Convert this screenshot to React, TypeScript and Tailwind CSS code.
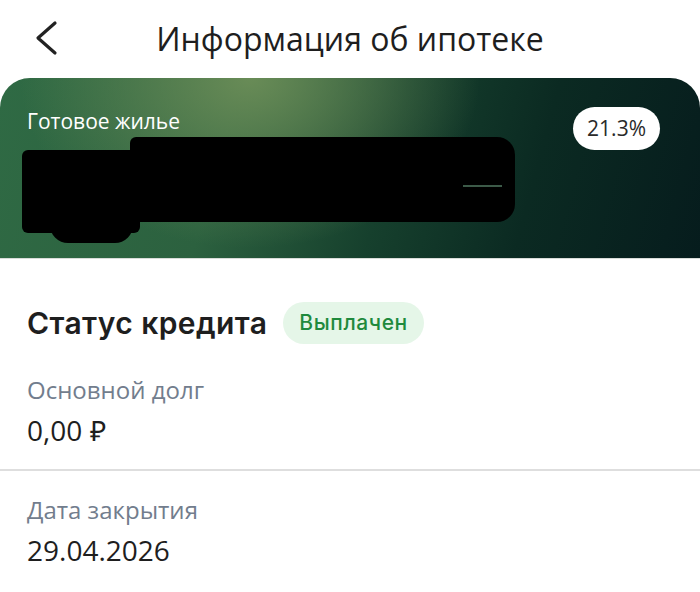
function BackIcon() {
  return (
    <svg width="26" height="36" viewBox="0 0 26 36" fill="none">
      <path d="M21 3L4 18L21 33" stroke="#222" strokeWidth="3.2" strokeLinecap="round" strokeLinejoin="round" />
    </svg>
  );
}

function InfoRow({ label, value }: { label: string; value: string }) {
  return (
    <div className="flex flex-col gap-[10px] px-[27px]">
      <p className="text-[24px] leading-[28px] text-[#727d8d]">{label}</p>
      <p className="text-[28px] leading-[32px] text-[#1e1e1e]">{value}</p>
    </div>
  );
}

export default function App() {
  return (
    <div className="w-[700px] h-[592px] bg-white overflow-hidden font-['Open_Sans',sans-serif]">
      {/* Header */}
      <div className="h-[78px] grid grid-cols-[1fr_auto_1fr] items-center">
        <div className="pl-[34px] pb-[2px]">
          <BackIcon />
        </div>
        <h1 className="text-[32px] leading-none text-[#1e1e1e] -mt-[1px]">Информация об ипотеке</h1>
        <div />
      </div>

      {/* Banner */}
      <div
        className="relative h-[180px] rounded-t-[30px] overflow-hidden bg-[#0b2a22]"
        style={{
          backgroundImage:
            'radial-gradient(ellipse 230px 170px at 250px 0px, rgba(108,142,88,0.95), rgba(108,142,88,0) 100%), linear-gradient(105deg, #2f6a44 0%, #2c613f 32%, #16402d 55%, #0b2a22 75%, #061c1d 100%)',
        }}
      >
        <div className="flex items-start justify-between pl-[27px] pr-[40px] pt-[29px]">
          <span className="text-[21px] leading-[28px] text-white">Готовое жилье</span>
          <span className="h-[43px] px-[14px] rounded-full bg-white flex items-center text-[21px] text-[#2a2a2a]">21.3%</span>
        </div>
        {/* redacted block */}
        <div className="absolute left-[50px] top-[142px] w-[83px] h-[23px] rounded-b-[18px] bg-black" />
        <div className="absolute left-[22px] top-[72px] w-[118px] h-[83px] rounded-[6px] bg-black" />
        <div className="absolute left-[130px] top-[59px] w-[385px] h-[85px] rounded-r-[18px] rounded-tl-[6px] bg-black" />
        <div className="absolute left-[463px] top-[107px] w-[39px] h-[2px] bg-[#3c5a48]" />
      </div>

      {/* Status */}
      <div className="border-t border-[#d9dcd9] pt-[43px]">
        <div className="flex items-center px-[27px]">
          <h2 className="font-['Inter',sans-serif] font-semibold text-[30px] leading-none text-[#1e1e1e] tracking-[0.4px]">Статус кредита</h2>
          <span className="ml-[16px] h-[42px] px-[16px] rounded-full bg-[#e5f6e8] flex items-center font-['Inter',sans-serif] font-medium text-[21px] tracking-[0.6px] text-[#1f8a3d]">Выплачен</span>
        </div>
        <div className="mt-[32px]">
          <InfoRow label="Основной долг" value="0,00 ₽" />
        </div>
        <div className="mt-[23px] border-t-2 border-[#dedede]" />
        <div className="mt-[25px]">
          <InfoRow label="Дата закрытия" value="29.04.2026" />
        </div>
      </div>
    </div>
  );
}
